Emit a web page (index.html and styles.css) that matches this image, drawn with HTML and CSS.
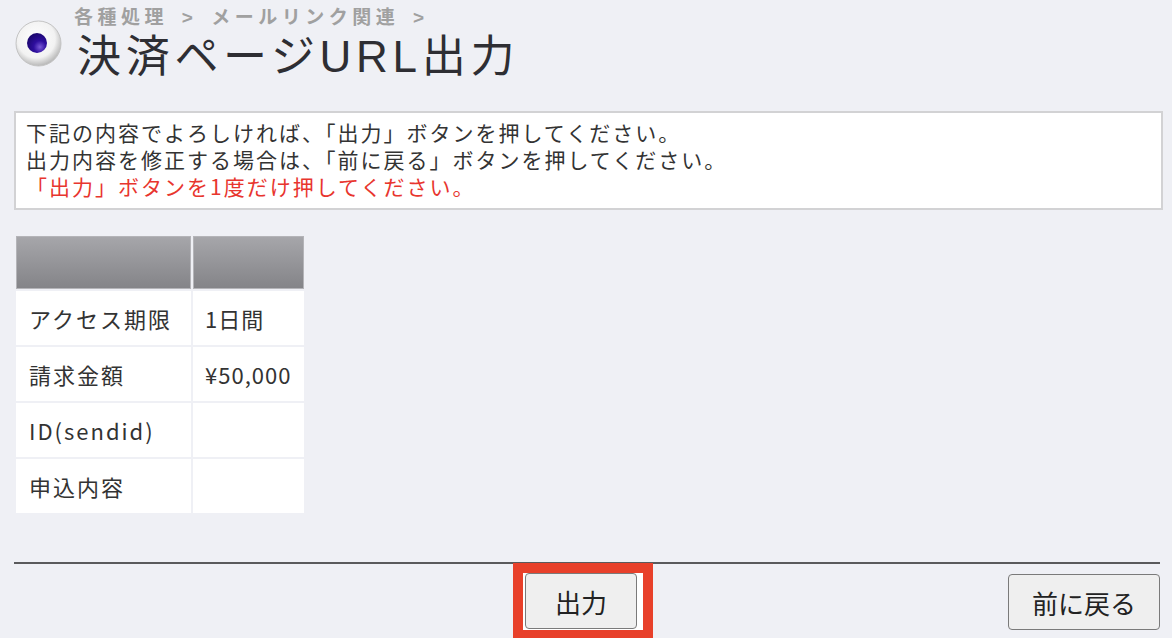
FILE: index.html
```html
<!DOCTYPE html>
<html lang="ja">
<head>
<meta charset="utf-8">
<title>決済ページURL出力</title>
<link rel="stylesheet" href="styles.css">
</head>
<body>
<div class="page">
  <div class="header">
    <svg class="icon" width="47" height="47" viewBox="0 0 47 47">
      <defs>
        <radialGradient id="ball" cx="45%" cy="40%" r="60%">
          <stop offset="0%" stop-color="#ffffff"/>
          <stop offset="70%" stop-color="#f2f2f2"/>
          <stop offset="100%" stop-color="#b8b8b8"/>
        </radialGradient>
        <radialGradient id="dot" cx="65%" cy="70%" r="70%">
          <stop offset="0%" stop-color="#7a5ad8"/>
          <stop offset="45%" stop-color="#2e0e9e"/>
          <stop offset="100%" stop-color="#1c0870"/>
        </radialGradient>
      </defs>
      <circle cx="23.5" cy="23.5" r="22.5" fill="url(#ball)" stroke="#c4c4c4" stroke-width="1"/>
      <circle cx="22" cy="23" r="10" fill="url(#dot)"/>
    </svg>
    <div class="titles">
      <div class="breadcrumb">各種処理 &gt; メールリンク関連 &gt;</div>
      <h1 class="title">決済ページURL出力</h1>
    </div>
  </div>

  <div class="message">
    <p>下記の内容でよろしければ、「出力」ボタンを押してください。</p>
    <p>出力内容を修正する場合は、「前に戻る」ボタンを押してください。</p>
    <p class="warn">「出力」ボタンを1度だけ押してください。</p>
  </div>

  <table class="data">
    <thead>
      <tr><th class="c1"></th><th class="c2"></th></tr>
    </thead>
    <tbody>
      <tr><td>アクセス期限</td><td class="val">1日間</td></tr>
      <tr><td>請求金額</td><td class="val">¥50,000</td></tr>
      <tr><td>ID(sendid)</td><td class="val"></td></tr>
      <tr><td>申込内容</td><td class="val"></td></tr>
    </tbody>
  </table>

  <hr class="rule">

  <div class="actions">
    <span class="highlight"><button class="btn btn-out" type="button">出力</button></span>
    <button class="btn btn-back" type="button">前に戻る</button>
  </div>
</div>
</body>
</html>
```

FILE: styles.css
```css
html, body {
  margin: 0;
  padding: 0;
  background: #eff0f5;
  height: 100%;
  overflow: hidden;
}

body {
  font-family: "Noto Sans CJK JP", "Noto Sans", sans-serif;
  color: #333;
}

.page {
  padding: 0 12px 0 14px;
}

.header {
  display: flex;
  align-items: flex-start;
}

.icon {
  margin-top: 20px;
  margin-left: 1px;
  flex: none;
}

.titles {
  margin-left: 12px;
}

.breadcrumb {
  padding-top: 7px;
  font-family: "Liberation Sans", "Noto Sans CJK JP", sans-serif;
  font-size: 19px;
  line-height: 22px;
  font-weight: bold;
  color: #a0a0a0;
  letter-spacing: 4.5px;
  word-spacing: 4px;
  white-space: nowrap;
}

.title {
  margin: 3px 0 0 3px;
  font-family: "Liberation Sans", "Noto Sans CJK JP", sans-serif;
  font-size: 44px;
  line-height: 50px;
  font-weight: normal;
  color: #2e2e33;
  letter-spacing: 4.7px;
  white-space: nowrap;
}

.message {
  margin-top: 29px;
  margin-right: -3px;
  background: #fff;
  border: 2px solid #d2d2d4;
  padding: 6px 10px 8px;
  font-size: 21px;
  line-height: 27px;
  letter-spacing: 2px;
  color: #333;
}

.message p {
  margin: 0;
}

.message .warn {
  color: #e8352e;
}

.data {
  margin-top: 24px;
  border-collapse: separate;
  border-spacing: 2px;
}

.data th {
  height: 51px;
  padding: 0;
  background: linear-gradient(#a6a6aa, #848488);
  border: 1px solid #b4b4b8;
}

.data .c1 { width: 173px; }
.data .c2 { width: 109px; }

.data td {
  height: 54px;
  padding: 0 0 0 13px;
  background: #fff;
  font-size: 22px;
  letter-spacing: 2px;
  color: #333;
  white-space: nowrap;
}

.data td.val {
  padding-left: 12px;
  letter-spacing: 1px;
}

.rule {
  margin: 47px 0 0;
  border: 0;
  height: 2px;
  background: #5a5a5c;
}

.actions {
  display: flex;
  align-items: flex-start;
  margin-top: -1px;
}

.highlight {
  display: block;
  margin-left: 499px;
  border: 10px solid #e8402a;
  background: #fff;
  padding: 0 6px 1px 2px;
}

.btn {
  display: block;
  height: 56px;
  background: #efefef;
  border: 1px solid #7a7a7a;
  border-radius: 4px;
  font-family: "Noto Sans CJK JP", sans-serif;
  font-size: 26px;
  color: #222;
  padding: 0;
}

.btn-out {
  width: 112px;
}

.btn-back {
  width: 152px;
  margin-left: auto;
  margin-top: 11px;
}
```
